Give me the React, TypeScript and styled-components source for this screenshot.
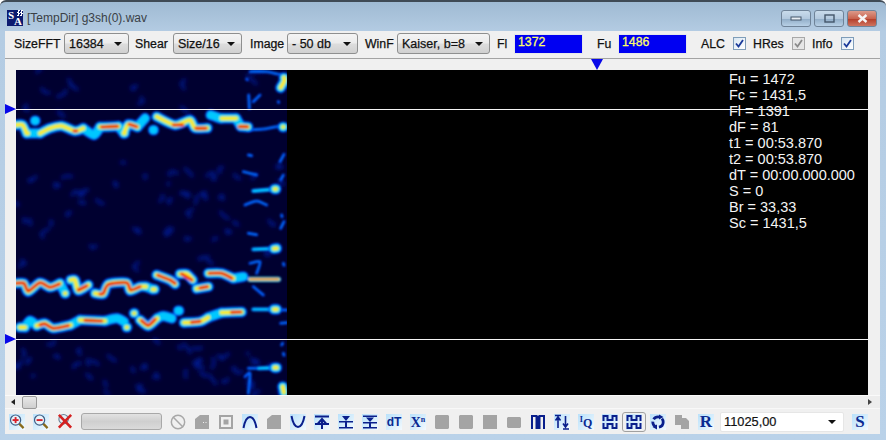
import * as React from "react";
import styled, { createGlobalStyle } from "styled-components";
import { Ban } from "lucide-react";

const GlobalStyle = createGlobalStyle`
  html, body {
    margin: 0;
    padding: 0;
    width: 886px;
    height: 440px;
    overflow: hidden;
    background: #fff;
  }
`;

const Window = styled.div`
  width: 886px;
  height: 440px;
  box-sizing: border-box;
  display: flex;
  flex-direction: column;
  border-top: 2px solid #3f4a55;
  border-radius: 6px 6px 0 0;
  background: linear-gradient(to bottom, #9fbad3 0, #b4cce3 30px, #bad2e9 100%);
  font-family: "Liberation Sans", Arial, sans-serif;
`;

const TitleBar = styled.div`
  height: 29px;
  flex: none;
  display: flex;
  align-items: center;
  padding: 3px 9px 0 7px;
  box-sizing: border-box;
`;

const Logo = styled.div`
  width: 16px;
  height: 16px;
  position: relative;
  background: #0c1a70;
  color: #fff;
  font-family: "Liberation Serif", serif;
  font-weight: 700;
  font-size: 11px;
  overflow: hidden;
  flex: none;
`;

const LogoS = styled.span`
  position: absolute;
  left: 1px;
  top: -1px;
`;

const LogoA = styled.span`
  position: absolute;
  left: 7px;
  top: 5px;
`;

const LogoCheck = styled.span`
  position: absolute;
  right: 0;
  top: 0;
  width: 6px;
  height: 6px;
  background: repeating-conic-gradient(#fff 0 25%, #0c1a70 0 50%) 0 0 / 3px 3px;
`;

const Title = styled.div`
  margin-left: 4px;
  font-size: 12px;
  color: #3a3f46;
  flex: 1;
`;

const Caption = styled.div`
  width: 30px;
  height: 17px;
  margin-left: 3px;
  box-sizing: border-box;
  border: 1px solid #6f8398;
  border-radius: 3px;
  display: flex;
  align-items: center;
  justify-content: center;
  background: ${({ $close }: { $close?: boolean }) =>
    $close
      ? "linear-gradient(to bottom, #dc9a8a 0, #c9644f 50%, #b5402c 55%, #cf7460 100%)"
      : "linear-gradient(to bottom, #c9dbeb 0, #b3c9de 50%, #93afc9 55%, #b8d0e6 100%)"};
`;

const Client = styled.div`
  flex: 1;
  margin: 0 6px 6px 5px;
  background: #f0f0f0;
  display: flex;
  flex-direction: column;
  min-height: 0;
`;

const Toolbar = styled.div`
  height: 28px;
  flex: none;
  box-sizing: border-box;
  border-bottom: 1px solid #a3a3a3;
  display: flex;
  align-items: center;
  padding: 0 0 2px 9px;
`;

const Label = styled.span<{ $left?: number; $width: number }>`
  font-size: 12.3px;
  color: #111;
  -webkit-text-stroke: 0.25px #111;
  margin-left: ${({ $left }) => $left ?? 0}px;
  width: ${({ $width }) => $width}px;
  flex: none;
  white-space: nowrap;
`;

const Combo = styled.div<{ $width: number; $left: number }>`
  width: ${({ $width }) => $width}px;
  margin-left: ${({ $left }) => $left}px;
  height: 21px;
  flex: none;
  box-sizing: border-box;
  border: 1px solid #8e8f8f;
  border-radius: 3px;
  background: linear-gradient(to bottom, #f4f4f4 0, #ececec 45%, #dcdcdc 55%, #d0d0d0 100%);
  display: flex;
  align-items: center;
  justify-content: space-between;
  padding: 0 6px 0 4px;
  font-size: 12.5px;
  color: #111;
  -webkit-text-stroke: 0.25px #111;
  white-space: nowrap;
`;

const Arrow = styled.span`
  width: 0;
  height: 0;
  flex: none;
  border-left: 4px solid transparent;
  border-right: 4px solid transparent;
  border-top: 4px solid #111;
`;

const FreqInput = styled.div<{ $left: number }>`
  width: 69px;
  height: 20px;
  flex: none;
  margin-left: ${({ $left }) => $left}px;
  box-sizing: border-box;
  border: 1px solid #e6e8ea;
  background: #0000f2;
  color: #ffff66;
  -webkit-text-stroke: 0.3px #ffff66;
  font-size: 12.3px;
  padding: 0 3px;
  line-height: 15px;
`;

const Check = styled.div<{ $left: number; $off?: boolean }>`
  width: 13px;
  height: 13px;
  flex: none;
  margin-left: ${({ $left }) => $left}px;
  box-sizing: border-box;
  border: 1px solid ${({ $off }) => ($off ? "#a8a8a8" : "#7f9db9")};
  background: ${({ $off }) =>
    $off ? "#e6e6e6" : "linear-gradient(135deg, #d8e6f2, #fff)"};
  display: flex;
  align-items: center;
  justify-content: center;
`;

const Stage = styled.div`
  flex: none;
  padding: 11px 12px 0 11px;
`;

const Canvas = styled.div`
  position: relative;
  height: 325px;
  background: #000;
`;

const SpectrumSvg = styled.svg`
  display: block;
  width: 271px;
  height: 325px;
`;

const Cursor = styled.div<{ $top: number }>`
  position: absolute;
  left: 0;
  right: 0;
  top: ${({ $top }) => $top}px;
  height: 1px;
  background: #f4f4f4;
`;

const MarkerRight = styled.div<{ $top: number }>`
  position: absolute;
  left: -11px;
  top: ${({ $top }) => $top}px;
  width: 0;
  height: 0;
  border-top: 5.5px solid transparent;
  border-bottom: 5.5px solid transparent;
  border-left: 11px solid #0808e8;
`;

const MarkerDown = styled.div`
  position: absolute;
  left: 575px;
  top: -11px;
  width: 0;
  height: 0;
  border-left: 6px solid transparent;
  border-right: 6px solid transparent;
  border-top: 11px solid #0808e8;
`;

const InfoBox = styled.div`
  position: absolute;
  left: 713px;
  top: 1px;
  color: #f4f4f4;
  font-size: 14.5px;
  line-height: 16px;
  white-space: nowrap;
`;

const ScrollBar = styled.div`
  height: 14px;
  flex: none;
  border-top: 1px solid #fafafa;
  border-bottom: 1px solid #f8f8f8;
  box-sizing: border-box;
  background: #ededed;
  display: flex;
  align-items: center;
  padding: 0 8px 0 6px;
`;

const ScrollArrow = styled.span<{ $right?: boolean }>`
  width: 0;
  height: 0;
  border-top: 3.5px solid transparent;
  border-bottom: 3.5px solid transparent;
  ${({ $right }) =>
    $right
      ? "border-left: 4px solid #444; margin-left: auto;"
      : "border-right: 4px solid #222;"}
`;

const Thumb = styled.div`
  width: 15px;
  height: 13px;
  margin-left: 7px;
  box-sizing: border-box;
  border: 1px solid #9a9a9a;
  border-radius: 2px;
  background: linear-gradient(to bottom, #e8e8e8, #cfcfcf);
`;

const BottomBar = styled.div`
  flex: 1;
  display: flex;
  align-items: center;
  padding: 0 0 0 4px;
`;

const Tool = styled.div<{ $plain?: boolean; $pressed?: boolean }>`
  position: relative;
  width: 16px;
  height: 16px;
  flex: none;
  margin-right: 8px;
  display: flex;
  align-items: center;
  justify-content: center;
  background: ${({ $plain }) =>
    $plain ? "transparent" : "linear-gradient(135deg, #b9e1fb 0, #d8eefc 55%, #f4fafe 100%)"};
  ${({ $pressed }) =>
    $pressed
      ? `&::after {
          content: "";
          position: absolute;
          inset: -2px -4px;
          border: 1px solid #a0a0a0;
          border-radius: 3px;
        }`
      : ""}
`;

const ToolText = styled.span<{ $serif?: boolean; $size: number }>`
  font-family: ${({ $serif }) =>
    $serif ? '"Liberation Serif", serif' : '"Liberation Sans", sans-serif'};
  font-weight: 700;
  font-size: ${({ $size }) => $size}px;
  color: #0a2a92;
  line-height: 16px;
  white-space: nowrap;
`;

const Sup = styled.span`
  font-size: 8px;
  vertical-align: 5px;
`;

const Progress = styled.div`
  width: 81px;
  height: 17px;
  flex: none;
  margin-right: 8px;
  box-sizing: border-box;
  border: 1px solid #a8a8a8;
  border-radius: 3px;
  background: linear-gradient(to bottom, #e2e2e2 0, #cfcfcf 50%, #dadada 100%);
`;

const RateBox = styled.div`
  width: 124px;
  height: 20px;
  flex: none;
  margin: 0 8px 0 -2px;
  box-sizing: border-box;
  border: 1px solid #e6e6e6;
  border-radius: 2px;
  background: #fff;
  display: flex;
  align-items: center;
  justify-content: space-between;
  padding: 0 7px 0 3px;
  font-size: 12.8px;
  color: #111;
  -webkit-text-stroke: 0.2px #111;
`;

type Pts = number[];

// coordinates are the 3x zoom of the picture, y already shifted by section
const up = (p: Pts) => p.map((v, i) => (i % 2 ? v + 195 : v));
const lo = (p: Pts) => p.map((v, i) => (i % 2 ? v + 690 : v));

const warm: Pts[] = [
  up([48, 180, 68, 180, 80, 205]),
  up([120, 205, 150, 190, 185, 183, 225, 198, 250, 190]),
  up([300, 186, 355, 184]),
  up([372, 205, 385, 178, 412, 186]),
  up([470, 155, 525, 180, 570, 165, 585, 189, 622, 189]),
  up([665, 160, 708, 160]),
  up([722, 184, 744, 186]),
  lo([48, 160, 72, 160, 85, 185, 120, 158, 150, 172, 180, 160]),
  lo([212, 150, 225, 150, 235, 182, 265, 165]),
  lo([285, 190, 310, 192, 325, 162, 380, 158, 390, 182, 420, 170, 438, 170]),
  lo([458, 178, 464, 178]),
  lo([470, 135, 510, 150, 525, 162]),
  lo([540, 132, 560, 132, 578, 150]),
  lo([590, 176, 625, 170]),
  lo([625, 130, 665, 130, 700, 145]),
  lo([60, 292, 75, 292]),
  lo([110, 287, 135, 280, 160, 295, 212, 285]),
  lo([240, 270, 315, 273]),
  lo([420, 270, 445, 288, 472, 265]),
  lo([552, 278, 600, 275, 625, 262]),
  lo([665, 248, 725, 246]),
  lo([380, 292, 381, 292]),
  lo([402, 250, 403, 250]),
  lo([195, 190, 196, 190]),
  up([82, 205, 84, 205]),
  up([372, 205, 374, 205]),
];

const cool: Pts[] = [
  up([80, 205, 120, 205]),
  up([250, 190, 282, 210, 300, 186]),
  up([355, 184, 372, 205]),
  up([412, 186, 435, 160]),
  up([105, 167, 106, 167]),
  up([460, 195, 461, 195]),
  up([632, 150, 660, 160, 665, 160]),
  up([708, 160, 722, 184]),
  lo([75, 292, 90, 272, 110, 287]),
  lo([212, 285, 240, 270]),
  lo([315, 273, 350, 265, 372, 275]),
  lo([472, 265, 490, 258, 515, 265]),
  lo([535, 242, 537, 242]),
  lo([625, 262, 665, 248]),
  lo([700, 145, 730, 140]),
  lo([180, 160, 195, 190]),
  lo([438, 170, 458, 178]),
];

const hot: Pts[] = [
  up([305, 186, 352, 184]),
  up([388, 178, 410, 185]),
  up([520, 180, 548, 180]),
  up([588, 190, 618, 190]),
  up([718, 185, 742, 185]),
  up([222, 198, 230, 198]),
  lo([48, 160, 72, 160, 85, 183, 120, 158, 150, 172, 178, 162]),
  lo([235, 180, 260, 168]),
  lo([300, 192, 310, 190, 325, 164, 380, 158, 392, 180, 420, 170]),
  lo([474, 136, 510, 150, 525, 160]),
  lo([545, 132, 575, 150]),
  lo([600, 174, 622, 170]),
  lo([628, 130, 665, 130, 695, 145]),
  lo([120, 285, 135, 282, 160, 295, 205, 287]),
  lo([255, 271, 305, 273]),
  lo([425, 272, 445, 286, 465, 268]),
  lo([575, 277, 600, 274]),
  lo([695, 247, 722, 246]),
];

// right hand column: short streaks that end in a bright tip
const streaks: Pts[] = [
  lo([760, 58, 834, 55]),
  lo([760, 238, 834, 238]),
  lo([775, 415, 833, 413]),
  up([760, 378, 832, 372]),
];

// the one streak that runs red all the way along
const redStreak: Pts[] = [lo([750, 148, 835, 148])];

const tips: Pts[] = [
  lo([822, 56, 830, 55]),
  lo([822, 238, 830, 238]),
  lo([824, 413, 830, 413]),
  up([824, 372, 828, 372]),
  up([852, 38, 853, 48, 842, 68]),
  up([849, 186, 850, 186]),
  lo([848, 470, 852, 488]),
];

const thin: Pts[] = [
  up([745, 195, 790, 192, 830, 185, 850, 185]),
  up([740, 42, 742, 44]),
  up([750, 20, 800, 20, 845, 30]),
  up([835, 110, 836, 112]),
  up([852, 268, 840, 290]),
  up([850, 330, 842, 345]),
  up([735, 420, 770, 408, 800, 420]),
  up([845, 450, 846, 455]),
  up([852, 470, 842, 490]),
  lo([745, 10, 770, 14]),
  lo([850, 100, 852, 106]),
  lo([845, 240, 860, 240]),
  lo([842, 280, 860, 278]),
  lo([845, 345, 848, 340]),
  lo([850, 370, 852, 376]),
  lo([745, 415, 770, 415]),
  lo([735, 440, 750, 430, 745, 490]),
  lo([750, 100, 780, 95, 770, 130]),
  lo([760, 170, 790, 195]),
  up([745, 270, 755, 272]),
  up([730, 320, 770, 330]),
  up([780, 90, 760, 110]),
  up([746, 90, 748, 130]),
];

// dim background speckle, seeded so every render is the same
const speckle: Pts[] = (() => {
  let seed = 7;
  const rnd = () => {
    seed = (seed * 16807) % 2147483647;
    return seed / 2147483647;
  };
  const out: Pts[] = [];
  for (let i = 0; i < 110; i++) {
    const x = 50 + rnd() * 800;
    let y = 215 + rnd() * 965;
    // the space round the traces is nearly clean
    if (y > 350 && y < 470) y += 140;
    if (y > 800 && y < 1010) y = 1030 + rnd() * 150;
    const dx = (rnd() - 0.5) * 40;
    const dy = (rnd() - 0.5) * 30;
    out.push([x, y, x + dx, y + dy, x + dx + (rnd() - 0.5) * 30, y + dy + (rnd() - 0.5) * 30]);
  }
  return out;
})();

// catmull-rom, so the curve still goes through every peak of the trace
const smooth = (p: Pts) => {
  const at = (i: number) => Math.max(0, Math.min(p.length - 2, i));
  let d = `M${p[0]} ${p[1]}`;
  for (let i = 0; i < p.length - 2; i += 2) {
    const [a, b, c, e] = [at(i - 2), i, i + 2, at(i + 4)];
    const c1x = p[b] + (p[c] - p[a]) / 8;
    const c1y = p[b + 1] + (p[c + 1] - p[a + 1]) / 8;
    const c2x = p[c] - (p[e] - p[b]) / 8;
    const c2y = p[c + 1] - (p[e + 1] - p[b + 1]) / 8;
    d += ` C${c1x} ${c1y} ${c2x} ${c2y} ${p[c]} ${p[c + 1]}`;
  }
  return d;
};

const Lines = ({ items, color, width, opacity }: { items: Pts[]; color: string; width: number; opacity?: number }) => (
  <g fill="none" stroke={color} strokeWidth={width} strokeLinecap="round" strokeLinejoin="round" opacity={opacity}>
    {items.map((p, i) => (
      <path key={i} d={smooth(p)} />
    ))}
  </g>
);

const Spectrum = () => {
  const bright = [...warm, ...cool, ...tips];
  const yellow = [...warm, ...tips];
  return (
    <SpectrumSvg viewBox="48 210 813 975" preserveAspectRatio="none">
      <defs>
        <filter id="soft" x="-5%" y="-5%" width="110%" height="110%">
          <feGaussianBlur stdDeviation="2.4" />
        </filter>
        <filter id="dim" x="-5%" y="-5%" width="110%" height="110%">
          <feGaussianBlur stdDeviation="6" />
        </filter>
        <filter id="haze" x="-5%" y="-5%" width="110%" height="110%">
          <feGaussianBlur stdDeviation="3.5" />
        </filter>
      </defs>
      <rect x="48" y="210" width="813" height="975" fill="#000030" />
      <g filter="url(#dim)">
        <Lines items={speckle} color="#0026b8" width={9} opacity={0.7} />
      </g>
      <g filter="url(#haze)">
        <Lines items={thin} color="#0040f0" width={9} />
        <Lines items={thin} color="#0090ff" width={3} />
        <Lines items={streaks} color="#0048f0" width={13} />
        <Lines items={streaks} color="#00d0ff" width={7} />
      </g>
      <g filter="url(#soft)">
        <Lines items={redStreak} color="#00c8ff" width={16} />
        <Lines items={redStreak} color="#ffe830" width={9} />
        <Lines items={redStreak} color="#e82000" width={4} />
        <Lines items={bright} color="#0038f0" width={33} />
        <Lines items={bright} color="#00c8ff" width={24} />
        <Lines items={yellow} color="#50f0a0" width={16} />
        <Lines items={yellow} color="#ffe830" width={11} />
        <Lines items={hot} color="#ff7000" width={11} />
        <Lines items={hot} color="#e81800" width={6} />
      </g>
    </SpectrumSvg>
  );
};

const INFO = [
  "Fu = 1472",
  "Fc = 1431,5",
  "Fl = 1391",
  "dF = 81",
  "t1 = 00:53.870",
  "t2 = 00:53.870",
  "dT = 00:00.000.000",
  "S = 0",
  "Br = 33,33",
  "Sc = 1431,5",
];

const Tick = ({ color }: { color: string }) => (
  <svg width="9" height="9" viewBox="0 0 9 9">
    <path d="M1 4.5 L3.5 7.5 L8 1" fill="none" stroke={color} strokeWidth="1.8" />
  </svg>
);

const Magnifier = ({ mark }: { mark: "plus" | "minus" }) => (
  <svg width="17" height="17" viewBox="0 0 17 17">
    <line x1="10" y1="10" x2="15.5" y2="15.5" stroke="#8a6a1a" strokeWidth="2.4" />
    <circle cx="7" cy="7" r="5.4" fill="#e8f4fb" stroke="#3f5f86" strokeWidth="1.3" />
    <rect x="3.8" y="6" width="6.4" height="2" fill="#d8202a" />
    {mark === "plus" && <rect x="6" y="3.8" width="2" height="6.4" fill="#d8202a" />}
  </svg>
);

const ClearZoom = () => (
  <svg width="17" height="17" viewBox="0 0 17 17">
    <circle cx="7" cy="6" r="5" fill="#e4eef5" stroke="#6a7f95" strokeWidth="1.2" />
    <path d="M2 1.5 L15 15 M15 1.5 L2 15" stroke="#d42020" strokeWidth="2.8" />
  </svg>
);

const Glyph = ({ d, fill }: { d: string; fill?: boolean }) => (
  <svg width="16" height="16" viewBox="0 0 16 16">
    <path
      d={d}
      fill={fill ? "#0a1f8c" : "none"}
      stroke={fill ? "none" : "#0a1f8c"}
      strokeWidth="2"
    />
  </svg>
);

const Gray = ({ d }: { d: string }) => (
  <svg width="16" height="16" viewBox="0 0 16 16">
    <path d={d} fill="#a4a4a4" fillRule="evenodd" />
  </svg>
);

const ROUNDED = "M2 1 H14 L15 2 V14 L14 15 H2 L1 14 V2 Z";
const MEANDER =
  "M1.5 7 V2 H5.5 V6 H10.5 V2 H14.5 V7 M1.5 9 V14 H5.5 V10 H10.5 V14 H14.5 V9";

const Recycle = () => (
  <svg width="16" height="16" viewBox="0 0 16 16">
    <circle cx="8" cy="8" r="5.2" fill="none" stroke="#0a1f8c" strokeWidth="2.8" strokeDasharray="7 2.4" />
    <path d="M9 0.5 L13.5 3 L9 5.5 Z M7 10.5 L2.5 13 L7 15.5 Z" fill="#0a1f8c" />
  </svg>
);

export default function App() {
  return (
    <>
      <GlobalStyle />
      <Window>
        <TitleBar>
          <Logo>
            <LogoS>S</LogoS>
            <LogoA>A</LogoA>
            <LogoCheck />
          </Logo>
          <Title>[TempDir] g3sh(0).wav</Title>
          <Caption>
            <svg width="12" height="6" viewBox="0 0 12 6">
              <rect x="1" y="2" width="10" height="3" fill="#e8eef4" stroke="#44566a" strokeWidth="1" />
            </svg>
          </Caption>
          <Caption>
            <svg width="11" height="9" viewBox="0 0 11 9">
              <rect x="1" y="1" width="9" height="7" fill="none" stroke="#44566a" strokeWidth="1.4" />
            </svg>
          </Caption>
          <Caption $close>
            <svg width="11" height="9" viewBox="0 0 11 9">
              <path d="M1.5 1 L9.5 8 M9.5 1 L1.5 8" stroke="#f6f6f6" strokeWidth="2.4" />
            </svg>
          </Caption>
        </TitleBar>
        <Client>
          <Toolbar>
            <Label $width={46}>SizeFFT</Label>
            <Combo $width={65} $left={4}>16384<Arrow /></Combo>
            <Label $width={33} $left={6}>Shear</Label>
            <Combo $width={69} $left={5}>Size/16<Arrow /></Combo>
            <Label $width={33} $left={8}>Image</Label>
            <Combo $width={71} $left={4}>- 50 db<Arrow /></Combo>
            <Label $width={29} $left={7}>WinF</Label>
            <Combo $width={93} $left={3}>Kaiser, b=8<Arrow /></Combo>
            <Label $width={11} $left={7}>Fl</Label>
            <FreqInput $left={6}>1372</FreqInput>
            <Label $width={15} $left={14}>Fu</Label>
            <FreqInput $left={6}>1486</FreqInput>
            <Label $width={25} $left={14}>ALC</Label>
            <Check $left={7}><Tick color="#1a3a9a" /></Check>
            <Label $width={30} $left={7}>HRes</Label>
            <Check $left={9} $off><Tick color="#8a8a8a" /></Check>
            <Label $width={22} $left={7}>Info</Label>
            <Check $left={7}><Tick color="#1a3a9a" /></Check>
          </Toolbar>
          <Stage>
            <Canvas>
              <Spectrum />
              <InfoBox>
                {INFO.map((line) => (
                  <div key={line}>{line}</div>
                ))}
              </InfoBox>
              <Cursor $top={39} />
              <Cursor $top={269} />
              <MarkerRight $top={34} />
              <MarkerRight $top={264} />
              <MarkerDown />
            </Canvas>
          </Stage>
          <ScrollBar>
            <ScrollArrow />
            <Thumb />
            <ScrollArrow $right />
          </ScrollBar>
          <BottomBar>
            <Tool><Magnifier mark="plus" /></Tool>
            <Tool><Magnifier mark="minus" /></Tool>
            <Tool $plain><ClearZoom /></Tool>
            <Progress />
            <Tool $plain><Ban size={16} color="#a8a8a8" strokeWidth={2.2} /></Tool>
            <Tool $plain><Gray d="M1 5 L6 1 H15 V15 H1 Z M9 8 H10 V9 H9 Z M11.5 8 H12.5 V9 H11.5 Z" /></Tool>
            <Tool $plain><Gray d="M1 1 H15 V15 H1 Z M3 3 V13 H13 V3 Z M5.5 5.5 H10.5 V10.5 H5.5 Z" /></Tool>
            <Tool><Glyph d="M1.5 14 C3 6 5 3 8 3 C11 3 13 6 14.5 14" /></Tool>
            <Tool $plain><Gray d="M1 5 L6 1 H15 V15 H1 Z" /></Tool>
            <Tool><Glyph d="M1.5 2 C3 10 5 13 8 13 C11 13 13 10 14.5 2" /></Tool>
            <Tool><Glyph d="M1 2.5 H15 M1 10 H15 M8 5 V15 M4 9.5 L8 5 L12 9.5" /></Tool>
            <Tool><Glyph fill d="M1 7 H15 V8.6 H9 V13 H15 V14.6 H1 V13 H7 V8.6 H1 Z M4 2 H12 L8 7 Z" /></Tool>
            <Tool><Glyph fill d="M1 1.5 H15 V3 H1 Z M4 3.5 H12 L8 8 Z M1 8 H15 V9.6 H9 V13 H15 V14.6 H1 V13 H7 V9.6 H1 Z" /></Tool>
            <Tool><ToolText $size={12}>dT</ToolText></Tool>
            <Tool><ToolText $serif $size={14}>X<Sup>n</Sup></ToolText></Tool>
            <Tool $plain><Gray d={ROUNDED} /></Tool>
            <Tool $plain><Gray d={ROUNDED} /></Tool>
            <Tool $plain><Gray d="M1 1 H15 V15 H1 Z" /></Tool>
            <Tool $plain><Gray d="M2 3 H14 L15 4 V13 L14 14 H2 L1 13 V4 Z" /></Tool>
            <Tool $plain><Glyph d="M2 15 V2 H6.5 V14 H9.5 V2 H14 V15 M8 2 V14" /></Tool>
            <Tool>
              <svg width="16" height="16" viewBox="0 0 16 16">
                <path d="M4 14 V4 M1.5 6.5 L4 3 L6.5 6.5 M1 1.5 H7 M11.5 2 V12 M9 9.5 L11.5 13 L14 9.5 M9 15 H15" fill="none" stroke="#0a1f8c" strokeWidth="1.6" />
              </svg>
            </Tool>
            <Tool><ToolText $serif $size={12}><Sup>I</Sup>Q</ToolText></Tool>
            <Tool><Glyph d={MEANDER} /></Tool>
            <Tool $pressed><Glyph d={MEANDER} /></Tool>
            <Tool><Recycle /></Tool>
            <Tool $plain><Gray d="M1 1 H8 V4 H12 L15 7 V15 H7 V11 H1 Z" /></Tool>
            <Tool><ToolText $serif $size={17}>R</ToolText></Tool>
            <RateBox>11025,00<Arrow /></RateBox>
            <Tool><ToolText $serif $size={17}>S</ToolText></Tool>
          </BottomBar>
        </Client>
      </Window>
    </>
  );
}
